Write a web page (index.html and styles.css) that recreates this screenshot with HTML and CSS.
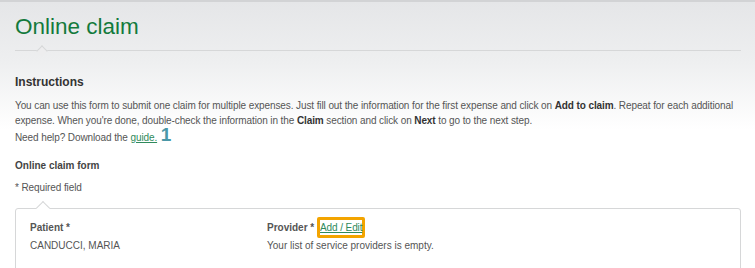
FILE: index.html
```html
<!DOCTYPE html>
<html lang="en">
<head>
    <meta charset="UTF-8">
    <meta name="viewport" content="width=device-width, initial-scale=1.0">
    <title>Online claim</title>
    <link rel="stylesheet" href="styles.css">
</head>
<body>
    <div class="page">
        <div class="title-bar">
            <h1>Online claim</h1>
        </div>
        <div class="content">
            <h2>Instructions</h2>
            <p>You can use this form to submit one claim for multiple expenses. Just fill out the information for the first expense and click on <b>Add to claim</b>. Repeat for each additional expense. When you're done, double-check the information in the <b>Claim</b> section and click on <b>Next</b> to go to the next step.</p>
            <p class="help">Need help? Download the <a href="#">guide.</a> <span class="step">1</span></p>
            <h3>Online claim form</h3>
            <p class="required">* Required field</p>
            <div class="form-box">
                <div class="field">
                    <div class="label">Patient *</div>
                    <div class="value">CANDUCCI, MARIA</div>
                </div>
                <div class="field provider">
                    <div class="label">Provider * <a href="#" class="edit-link">Add / Edit</a></div>
                    <div class="value">Your list of service providers is empty.</div>
                </div>
            </div>
        </div>
    </div>
</body>
</html>
```

FILE: styles.css
```css
body {
    font-family: "Liberation Sans", Arial, sans-serif;
    margin: 0;
    padding: 0;
    color: #555;
    background: #fff;
}
.page {
    border-top: 2px solid #d2d3d5;
    background: linear-gradient(to bottom, #e5e6e8 0px, #eeeff0 60px, #ffffff 128px);
    min-height: 266px;
    padding: 0 14px 0 15px;
}
.title-bar {
    position: relative;
    border-bottom: 1px solid #d6d7d8;
    padding-top: 12px;
    height: 36px;
}
.title-bar::before,
.form-box::before {
    content: "";
    position: absolute;
    border-top: 1px solid #d6d7d8;
    border-left: 1px solid #d6d7d8;
    transform: rotate(45deg);
}
.title-bar::before {
    width: 7px;
    height: 7px;
    left: 23px;
    bottom: -5px;
    background: #ededee;
}
h1 {
    margin: 0;
    font-size: 22.5px;
    line-height: 26px;
    font-weight: normal;
    color: #137a3c;
}
.content {
    padding-top: 24px;
}
h2 {
    margin: 0 0 8px;
    font-size: 12px;
    line-height: 15px;
    font-weight: bold;
    color: #333;
}
p {
    margin: 0;
    font-size: 10px;
    line-height: 15px;
    letter-spacing: -0.1px;
}
p b {
    color: #333;
}
.help {
    margin-top: 2px;
}
.help a {
    color: #2f8a5c;
}
.step {
    font-size: 19px;
    line-height: 10px;
    font-weight: bold;
    color: #4a98a8;
    margin-left: 1px;
}
h3 {
    margin: 13px 0 0;
    font-size: 10px;
    line-height: 15px;
    font-weight: bold;
    color: #444;
}
.required {
    margin-top: 7px;
}
.form-box {
    position: relative;
    margin-top: 13px;
    border: 1px solid #d6d7d8;
    border-radius: 3px;
    background: #fff;
    display: flex;
    padding: 11px 14px 0;
    height: 60px;
}
.form-box::before {
    width: 9px;
    height: 9px;
    left: 22px;
    top: -6px;
    background: #fff;
}
.field {
    width: 237px;
}
.label {
    font-size: 10px;
    font-weight: bold;
    color: #555;
    line-height: 15px;
}
.value {
    font-size: 10px;
    line-height: 15px;
    margin-top: 3px;
}
.edit-link {
    font-weight: normal;
    color: #2f8a5c;
    letter-spacing: -0.1px;
    border: 3px solid #f3a400;
    border-radius: 2px;
    padding: 2px 0;
}
```
